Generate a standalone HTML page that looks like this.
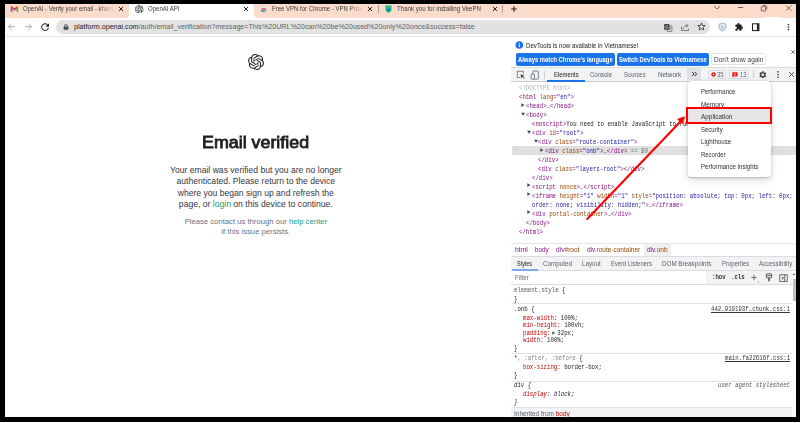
<!DOCTYPE html>
<html><head><meta charset="utf-8"><style>
html,body{margin:0;padding:0;}
body{width:800px;height:423px;background:#000;position:relative;overflow:hidden;font-family:"Liberation Sans", sans-serif;}
.t{position:absolute;white-space:nowrap;}
.r{position:absolute;}
.fade{-webkit-mask-image:linear-gradient(to right,#000 82%,transparent);}
.fade2{-webkit-mask-image:linear-gradient(to right,#000 85%,transparent);}
</style></head><body>
<div class="r" style="left:5px;top:4px;width:791px;height:413px;background:#fff;"></div>
<div class="r" style="left:0px;top:422px;width:800px;height:1px;background:#fff;"></div>
<div class="r" style="left:5px;top:4px;width:791px;height:14px;background:#fbdbc9;"></div>
<div class="r" style="left:125px;top:14px;width:4px;height:4px;background:#fff;"></div>
<div class="r" style="left:121px;top:10px;width:8px;height:8px;border-radius:4px;background:#fbdbc9"></div>
<div class="r" style="left:254px;top:14px;width:4px;height:4px;background:#fff;"></div>
<div class="r" style="left:254px;top:10px;width:8px;height:8px;border-radius:4px;background:#fbdbc9"></div>
<div class="r" style="left:129px;top:4px;width:125px;height:14px;background:#fff;border-radius:1.5px 1.5px 0 0"></div>
<div class="r" style="left:765px;top:17px;width:15px;height:1px;background:#fff;"></div>
<svg class="r" style="left:10px;top:5px;" width="9" height="7" viewBox="0 0 9 7"><path d="M1.6 6.3V1.8L4.5 4.6L7.4 1.8" fill="none" stroke="#ea4335" stroke-width="1.6" stroke-linejoin="round" stroke-linecap="round"/><path d="M1.6 3.2V6.3" stroke="#4285f4" stroke-width="1.6" stroke-linecap="round"/><path d="M7.4 3V6.3" stroke="#34a853" stroke-width="1.6" stroke-linecap="round"/><circle cx="7.4" cy="1.8" r="0.8" fill="#fbbc04"/></svg>
<div class="r fade" style="left:22.7px;top:4px;width:91px;height:10px;overflow:hidden"><div class="t" style="left:0;top:1.07px;font-size:7px;line-height:7px;color:#3c4043;transform:scaleX(0.86);transform-origin:0 0">OpenAI - Verify your email - khanh</div></div>
<svg class="r" style="left:117px;top:5px;" width="8" height="8" viewBox="0 0 8 8"><path d="M1.9 1.9L6.1 6.1M6.1 1.9L1.9 6.1" stroke="#202124" stroke-width="0.95"/></svg>
<svg class="r" style="left:135px;top:4.5px;" width="8.5" height="8.5" viewBox="0 0 24 24"><path d="M22.2819 9.8211a5.9847 5.9847 0 0 0-.5157-4.9108 6.0462 6.0462 0 0 0-6.5098-2.9A6.0651 6.0651 0 0 0 4.9807 4.1818a5.9847 5.9847 0 0 0-3.9977 2.9 6.0462 6.0462 0 0 0 .7427 7.0966 5.98 5.98 0 0 0 .511 4.9107 6.051 6.051 0 0 0 6.5146 2.9001A5.9847 5.9847 0 0 0 13.2599 24a6.0557 6.0557 0 0 0 5.7718-4.2058 5.9894 5.9894 0 0 0 3.9977-2.9001 6.0557 6.0557 0 0 0-.7475-7.0729zm-9.022 12.6081a4.4755 4.4755 0 0 1-2.8764-1.0408l.1419-.0804 4.7783-2.7582a.7948.7948 0 0 0 .3927-.6813v-6.7369l2.02 1.1686a.071.071 0 0 1 .038.052v5.5826a4.504 4.504 0 0 1-4.4945 4.4944zm-9.6607-4.1254a4.4708 4.4708 0 0 1-.5346-3.0137l.142.0852 4.783 2.7582a.7712.7712 0 0 0 .7806 0l5.8428-3.3685v2.3324a.0804.0804 0 0 1-.0332.0615L9.74 19.9502a4.4992 4.4992 0 0 1-6.1408-1.6464zM2.3408 7.8956a4.485 4.485 0 0 1 2.3655-1.9728V11.6a.7664.7664 0 0 0 .3879.6765l5.8144 3.3543-2.0201 1.1685a.0757.0757 0 0 1-.071 0l-4.8303-2.7865A4.504 4.504 0 0 1 2.3408 7.872zm16.5963 3.8558L13.1038 8.364 15.1192 7.2a.0757.0757 0 0 1 .071 0l4.8303 2.7913a4.4944 4.4944 0 0 1-.6765 8.1042v-5.6772a.79.79 0 0 0-.407-.667zm2.0107-3.0231l-.142-.0852-4.7735-2.7818a.7759.7759 0 0 0-.7854 0L9.409 9.2297V6.8974a.0662.0662 0 0 1 .0284-.0615l4.8303-2.7866a4.4992 4.4992 0 0 1 6.6802 4.66zM8.3065 12.863l-2.02-1.1638a.0804.0804 0 0 1-.038-.0567V6.0742a4.4992 4.4992 0 0 1 7.3757-3.4537l-.142.0805L8.704 5.459a.7948.7948 0 0 0-.3927.6813zm1.0976-2.3654l2.602-1.4998 2.6069 1.4998v2.9994l-2.5974 1.4997-2.6067-1.4997Z" fill="#202124"/></svg>
<div class="t" style="left:147.70px;top:5.07px;font-size:7px;line-height:7px;color:#3c4043;transform:scaleX(0.8611);transform-origin:0 0;">OpenAI API</div>
<svg class="r" style="left:241.5px;top:5px;" width="8" height="8" viewBox="0 0 8 8"><path d="M1.9 1.9L6.1 6.1M6.1 1.9L1.9 6.1" stroke="#202124" stroke-width="0.95"/></svg>
<svg class="r" style="left:260px;top:5px;" width="7.5" height="7.5" viewBox="0 0 7.5 7.5"><path d="M2.2 2.3A1.5 1.4 0 0 1 5.2 2.3" fill="none" stroke="#b8c4c8" stroke-width="0.6"/><rect x="0.2" y="1.9" width="7" height="5.3" rx="0.8" fill="#e6f2f6"/><path d="M0.9 5.6A2.8 2.7 0 0 1 6.5 5.6H5.1A1.4 1.3 0 0 0 2.3 5.6Z" fill="#ea4335"/><path d="M0.9 5.4H2.4L2.9 7H1.1Z" fill="#34a853"/><path d="M5 5.4H6.5L6.4 7H4.6Z" fill="#fbbc04"/><circle cx="3.7" cy="6" r="1.15" fill="#4285f4"/></svg>
<div class="r fade2" style="left:271.8px;top:4px;width:91px;height:10px;overflow:hidden"><div class="t" style="left:0;top:1.07px;font-size:7px;line-height:7px;color:#3c4043;transform:scaleX(0.86);transform-origin:0 0">Free VPN for Chrome - VPN Proxy</div></div>
<svg class="r" style="left:366px;top:5px;" width="8" height="8" viewBox="0 0 8 8"><path d="M1.9 1.9L6.1 6.1M6.1 1.9L1.9 6.1" stroke="#202124" stroke-width="0.95"/></svg>
<div class="r" style="left:378px;top:5px;width:1px;height:8px;background:#a8a29e;"></div>
<svg class="r" style="left:385px;top:4.8px;" width="7" height="8" viewBox="0 0 7 8"><defs><linearGradient id="vg" x1="0" y1="0" x2="0.6" y2="1"><stop offset="0" stop-color="#2fe0e0"/><stop offset="1" stop-color="#1c4fc8"/></linearGradient></defs><path d="M0.4 0.6H6.6V4.2C6.6 6 5 7.3 3.5 7.9C2 7.3 0.4 6 0.4 4.2Z" fill="#18c47c"/><circle cx="3.3" cy="3.9" r="2" fill="url(#vg)"/><rect x="4.6" y="2.1" width="1.6" height="1.1" fill="#f08080"/></svg>
<div class="t" style="left:397.00px;top:5.07px;font-size:7px;line-height:7px;color:#3c4043;transform:scaleX(0.8776);transform-origin:0 0;">Thank you for installing VeePN</div>
<svg class="r" style="left:490.5px;top:5px;" width="8" height="8" viewBox="0 0 8 8"><path d="M1.9 1.9L6.1 6.1M6.1 1.9L1.9 6.1" stroke="#202124" stroke-width="0.95"/></svg>
<div class="r" style="left:502px;top:5px;width:1px;height:8px;background:#a8a29e;"></div>
<svg class="r" style="left:510px;top:5px;" width="8" height="8" viewBox="0 0 8 8"><path d="M4 1.2V6.8M1.2 4H6.8" stroke="#202124" stroke-width="1.1"/></svg>
<svg class="r" style="left:713px;top:5px;" width="8" height="5" viewBox="0 0 8 5"><path d="M1 1.2 L4 4 L7 1.2" fill="none" stroke="#333" stroke-width="0.7"/></svg>
<svg class="r" style="left:736px;top:5px;" width="8" height="4" viewBox="0 0 8 4"><path d="M2 2.5H7.2" stroke="#333" stroke-width="0.7"/></svg>
<svg class="r" style="left:760px;top:4px;" width="8" height="8" viewBox="0 0 8 8"><rect x="1.3" y="2.7" width="4.2" height="4.2" rx="0.6" fill="none" stroke="#333" stroke-width="0.65"/><path d="M2.6 1.5H5.6A1.1 1.1 0 0 1 6.7 2.6V5.6" fill="none" stroke="#333" stroke-width="0.65"/></svg>
<svg class="r" style="left:785px;top:4px;" width="8" height="8" viewBox="0 0 8 8"><path d="M1 1.5L6.2 6.7M6.2 1.5L1 6.7" stroke="#333" stroke-width="0.7"/></svg>
<div class="r" style="left:5px;top:36px;width:791px;height:1px;background:#e3e3e3;"></div>
<svg class="r" style="left:7px;top:22px;" width="9" height="9" viewBox="0 0 9 9"><path d="M8 4.7H1.6M4.4 1.7L1.4 4.7L4.4 7.7" fill="none" stroke="#9aa0a6" stroke-width="0.85"/></svg>
<svg class="r" style="left:23.5px;top:22px;" width="9" height="9" viewBox="0 0 9 9"><path d="M1 4.7H7.4M4.6 1.7L7.6 4.7L4.6 7.7" fill="none" stroke="#9aa0a6" stroke-width="0.85"/></svg>
<svg class="r" style="left:40.5px;top:23.2px;" width="8.5" height="8" viewBox="4 3.5 16.5 16.5"><path d="M17.65 6.35A7.958 7.958 0 0 0 12 4c-4.42 0-7.99 3.58-7.99 8s3.57 8 7.99 8c3.73 0 6.84-2.55 7.73-6h-2.08A5.99 5.99 0 0 1 12 18c-3.31 0-6-2.69-6-6s2.69-6 6-6c1.66 0 3.14.69 4.22 1.78L13 11h7V4l-2.35 2.35z" fill="#202124"/></svg>
<div class="r" style="left:56px;top:20px;width:654px;height:14px;background:#e2e2e2;border-radius:7px"></div>
<svg class="r" style="left:62.7px;top:24.2px;" width="6" height="6" viewBox="0 0 6 6"><rect x="0.6" y="2.4" width="4.8" height="3.4" rx="0.5" fill="#474a4f"/><path d="M1.6 2.6V1.9a1.4 1.4 0 0 1 2.8 0V2.6" fill="none" stroke="#474a4f" stroke-width="0.8"/></svg>
<div class="t" style="left:74.00px;top:24.06px;font-size:7.13px;line-height:7.13px;color:#5f6368;"><span style="color:#202124">platform.openai.com</span>/auth/email_verification?message=This%20URL%20can%20be%20used%20only%20once&amp;success=false</div>
<svg class="r" style="left:663px;top:22.5px;" width="10" height="10" viewBox="0 0 10 10"><rect x="4.3" y="2.8" width="4.6" height="5.8" rx="0.6" fill="#e2e2e2" stroke="#5f6368" stroke-width="0.75"/><path d="M5.6 4.6H7.8M6.7 4.2V4.6M7.4 4.6C7.1 6 6.3 6.8 5.6 7.2M6 5.6C6.5 6.5 7.2 7 7.9 7.2" fill="none" stroke="#5f6368" stroke-width="0.5"/><rect x="1.1" y="1.1" width="5.3" height="5.7" rx="0.7" fill="#3c4043"/><path d="M4.9 3.1A1.45 1.45 0 1 0 5.1 4.2H3.8" fill="none" stroke="#e2e2e2" stroke-width="0.6"/></svg>
<svg class="r" style="left:680px;top:22px;" width="10" height="10" viewBox="0 0 10 10"><path d="M1.5 4.5V8.5H8.5V6.5" fill="none" stroke="#5f6368" stroke-width="0.8"/><path d="M3 7C3.5 4.5 5 3.6 7.5 3.6M6 1.8L8.2 3.6L6 5.4" fill="none" stroke="#5f6368" stroke-width="0.8"/></svg>
<svg class="r" style="left:697px;top:22px;" width="9" height="9" viewBox="0 0 9 9"><path d="M4.5 1L5.5 3.5L8.2 3.6L6.1 5.3L6.8 8L4.5 6.5L2.2 8L2.9 5.3L0.8 3.6L3.5 3.5Z" fill="none" stroke="#202124" stroke-width="0.75" stroke-linejoin="round"/></svg>
<svg class="r" style="left:718px;top:22px;" width="9" height="10" viewBox="0 0 9 10"><path d="M4.5 1 L8 2.2 V5 C8 7.2 6 8.5 4.5 9 C3 8.5 1 7.2 1 5 V2.2Z" fill="#dfe5f0" stroke="#8f9fbf" stroke-width="0.8"/><text x="3.1" y="6.8" font-size="4" fill="#8f9fbf" font-family="Liberation Sans">$</text></svg>
<svg class="r" style="left:734.8px;top:23.2px;" width="8.5" height="8" viewBox="1.5 1 22 21.5"><path d="M20.5 11H19V7c0-1.1-.9-2-2-2h-4V3.5C13 2.12 11.88 1 10.5 1S8 2.12 8 3.5V5H4c-1.1 0-1.99.9-1.99 2v3.8H3.5c1.49 0 2.7 1.21 2.7 2.7s-1.21 2.7-2.7 2.7H2V20c0 1.1.9 2 2 2h3.8v-1.5c0-1.490 1.21-2.7 2.7-2.7 1.49 0 2.7 1.21 2.7 2.7V22H17c1.1 0 2-.9 2-2v-4h1.5c1.38 0 2.5-1.12 2.5-2.5S21.88 11 20.5 11z" fill="#202124"/></svg>
<svg class="r" style="left:751px;top:22px;" width="10" height="10" viewBox="0 0 10 10"><rect x="1.5" y="1.8" width="6.4" height="6.8" fill="none" stroke="#202124" stroke-width="1.05"/><rect x="5.9" y="1.8" width="2" height="6.8" fill="#202124"/></svg>
<svg class="r" style="left:786px;top:22px;" width="4" height="10" viewBox="0 0 4 10"><circle cx="2.5" cy="2.5" r="0.85" fill="#202124"/><circle cx="2.5" cy="5" r="0.85" fill="#202124"/><circle cx="2.5" cy="7.5" r="0.85" fill="#202124"/></svg>
<svg class="r" style="left:248px;top:54px;" width="16" height="16" viewBox="0 0 24 24"><path d="M22.2819 9.8211a5.9847 5.9847 0 0 0-.5157-4.9108 6.0462 6.0462 0 0 0-6.5098-2.9A6.0651 6.0651 0 0 0 4.9807 4.1818a5.9847 5.9847 0 0 0-3.9977 2.9 6.0462 6.0462 0 0 0 .7427 7.0966 5.98 5.98 0 0 0 .511 4.9107 6.051 6.051 0 0 0 6.5146 2.9001A5.9847 5.9847 0 0 0 13.2599 24a6.0557 6.0557 0 0 0 5.7718-4.2058 5.9894 5.9894 0 0 0 3.9977-2.9001 6.0557 6.0557 0 0 0-.7475-7.0729zm-9.022 12.6081a4.4755 4.4755 0 0 1-2.8764-1.0408l.1419-.0804 4.7783-2.7582a.7948.7948 0 0 0 .3927-.6813v-6.7369l2.02 1.1686a.071.071 0 0 1 .038.052v5.5826a4.504 4.504 0 0 1-4.4945 4.4944zm-9.6607-4.1254a4.4708 4.4708 0 0 1-.5346-3.0137l.142.0852 4.783 2.7582a.7712.7712 0 0 0 .7806 0l5.8428-3.3685v2.3324a.0804.0804 0 0 1-.0332.0615L9.74 19.9502a4.4992 4.4992 0 0 1-6.1408-1.6464zM2.3408 7.8956a4.485 4.485 0 0 1 2.3655-1.9728V11.6a.7664.7664 0 0 0 .3879.6765l5.8144 3.3543-2.0201 1.1685a.0757.0757 0 0 1-.071 0l-4.8303-2.7865A4.504 4.504 0 0 1 2.3408 7.872zm16.5963 3.8558L13.1038 8.364 15.1192 7.2a.0757.0757 0 0 1 .071 0l4.8303 2.7913a4.4944 4.4944 0 0 1-.6765 8.1042v-5.6772a.79.79 0 0 0-.407-.667zm2.0107-3.0231l-.142-.0852-4.7735-2.7818a.7759.7759 0 0 0-.7854 0L9.409 9.2297V6.8974a.0662.0662 0 0 1 .0284-.0615l4.8303-2.7866a4.4992 4.4992 0 0 1 6.6802 4.66zM8.3065 12.863l-2.02-1.1638a.0804.0804 0 0 1-.038-.0567V6.0742a4.4992 4.4992 0 0 1 7.3757-3.4537l-.142.0805L8.704 5.459a.7948.7948 0 0 0-.3927.6813zm1.0976-2.3654l2.602-1.4998 2.6069 1.4998v2.9994l-2.5974 1.4997-2.6067-1.4997Z" fill="#202123"/></svg>
<div class="t" style="left:202.3px;top:133.5px;font-size:16.6px;line-height:18px;color:#202123;-webkit-text-stroke:0.8px #202123;transform:scaleX(1.075);transform-origin:0 0">Email verified</div>
<div class="t" style="left:5px;width:501.6px;text-align:center;top:164.5px;font-size:8.6px;line-height:11.5px;color:#353740">Your email was verified but you are no longer<br>authenticated. Please return to the device<br>where you began sign up and refresh the<br>page, or <span style="color:#10a37f">login</span> on this device to continue.</div>
<div class="t" style="left:5px;width:501.6px;text-align:center;top:216.8px;font-size:7.7px;line-height:10.6px;color:#6e6e80">Please contact us through our <span style="color:#10a37f">help center</span><br>if this issue persists.</div>
<svg class="r" style="left:515px;top:41px;" width="9" height="9" viewBox="0 0 9 9"><circle cx="4.3" cy="4" r="3.8" fill="#1a73e8"/><rect x="3.8" y="3.3" width="1" height="2.8" fill="#fff"/><rect x="3.8" y="1.8" width="1" height="1" fill="#fff"/></svg>
<div class="t" style="left:526.00px;top:42.07px;font-size:7px;line-height:7px;color:#202124;transform:scaleX(0.8755);transform-origin:0 0;">DevTools is now available in Vietnamese!</div>
<svg class="r" style="left:789px;top:48px;" width="8" height="8" viewBox="0 0 8 8"><path d="M2.2 2.2L5.8 5.8M5.8 2.2L2.2 5.8" stroke="#5f6368" stroke-width="0.8"/></svg>
<div class="r" style="left:516px;top:53px;width:98.5px;height:12.5px;background:#1a73e8;border-radius:2px"></div>
<div class="t" style="left:517.90px;top:56.74px;font-size:6.8px;line-height:6.8px;color:#fff;font-weight:bold;transform:scaleX(0.8603);transform-origin:0 0;">Always match Chrome's language</div>
<div class="r" style="left:617px;top:53px;width:92px;height:12.5px;background:#1a73e8;border-radius:2px"></div>
<div class="t" style="left:619.00px;top:56.74px;font-size:6.8px;line-height:6.8px;color:#fff;font-weight:bold;transform:scaleX(0.8617);transform-origin:0 0;">Switch DevTools to Vietnamese</div>
<div class="r" style="left:711.3px;top:53.2px;width:54.3px;height:12.3px;background:#fff;border:0.7px solid #dfe1e5;border-radius:2.5px;box-sizing:border-box"></div>
<div class="t" style="left:713.80px;top:56.74px;font-size:6.8px;line-height:6.8px;color:#3c4043;transform:scaleX(0.9509);transform-origin:0 0;">Don't show again</div>
<div class="r" style="left:511px;top:67px;width:285px;height:15px;background:#f1f3f4;border-top:1px solid #dadce0;border-bottom:1px solid #cbcdd1;box-sizing:border-box"></div>
<svg class="r" style="left:516px;top:70px;" width="9" height="10" viewBox="0 0 9 10"><path d="M4.2 7.6H1.3V1.3H7.3V4.2" fill="none" stroke="#5f6368" stroke-width="0.75"/><path d="M4.3 4.3L8.6 5.8L6.9 6.5L8.8 8.4L8.3 8.9L6.4 7L5.7 8.7Z" fill="#474747"/></svg>
<svg class="r" style="left:529.5px;top:69.5px;" width="10" height="10" viewBox="0 0 10 10"><rect x="2.8" y="1.1" width="5.6" height="8" rx="0.6" fill="none" stroke="#5f6368" stroke-width="0.75"/><rect x="1.1" y="4" width="3.4" height="5.1" rx="0.5" fill="#f1f3f4" stroke="#5f6368" stroke-width="0.75"/></svg>
<div class="r" style="left:544px;top:70.5px;width:1px;height:8px;background:#cbcdd1;"></div>
<div class="t" style="left:553.50px;top:71.54px;font-size:6.8px;line-height:6.8px;color:#202124;transform:scaleX(0.8714);transform-origin:0 0;">Elements</div>
<div class="r" style="left:547px;top:80px;width:38px;height:2px;background:#1a73e8;"></div>
<div class="t" style="left:590.00px;top:71.54px;font-size:6.8px;line-height:6.8px;color:#5f6368;transform:scaleX(0.8818);transform-origin:0 0;">Console</div>
<div class="t" style="left:624.00px;top:71.54px;font-size:6.8px;line-height:6.8px;color:#5f6368;transform:scaleX(0.8659);transform-origin:0 0;">Sources</div>
<div class="t" style="left:657.80px;top:71.54px;font-size:6.8px;line-height:6.8px;color:#5f6368;transform:scaleX(0.9303);transform-origin:0 0;">Network</div>
<div class="r" style="left:687.2px;top:67.5px;width:14px;height:12.5px;background:#dfe1e5;"></div>
<svg class="r" style="left:690.5px;top:71px;" width="7" height="6" viewBox="0 0 7 6"><path d="M1.2 1L3 3L1.2 5M3.8 1L5.6 3L3.8 5" fill="none" stroke="#202124" stroke-width="0.9"/></svg>
<div class="r" style="left:707.6px;top:69.5px;width:18.5px;height:9.6px;background:#f5f6f7;border:0.7px solid #dadce0;border-radius:2px;box-sizing:border-box"></div>
<svg class="r" style="left:710.5px;top:72.3px;" width="5" height="5" viewBox="0 0 5 5"><circle cx="2.5" cy="2.5" r="2.3" fill="#e41e1e"/><circle cx="2.5" cy="2.5" r="0.8" fill="#fff"/></svg>
<div class="t" style="left:717.00px;top:71.54px;font-size:6.8px;line-height:6.8px;color:#5f6368;transform:scaleX(0.8594);transform-origin:0 0;">35</div>
<div class="r" style="left:728.7px;top:69.5px;width:20.6px;height:9.6px;background:#f5f6f7;border:0.7px solid #dadce0;border-radius:2px;box-sizing:border-box"></div>
<svg class="r" style="left:731.8px;top:71.8px;" width="6" height="6" viewBox="0 0 6 6"><path d="M0.3 0.3H5.6V4.4H1.6L0.3 5.6Z" fill="#e41e1e"/><path d="M2.9 1.1V3.6" stroke="#fff" stroke-width="0.7"/></svg>
<div class="t" style="left:739.70px;top:71.54px;font-size:6.8px;line-height:6.8px;color:#5f6368;transform:scaleX(0.8594);transform-origin:0 0;">13</div>
<div class="r" style="left:753px;top:70.3px;width:1px;height:8px;background:#cbcdd1;"></div>
<svg class="r" style="left:758.8px;top:70.6px;" width="7.6" height="7.6" viewBox="2.2 1.6 19.6 20.8"><path d="M19.14 12.94c.04-.3.06-.61.06-.94 0-.32-.02-.64-.07-.94l2.03-1.58a.49.49 0 0 0 .12-.61l-1.92-3.32a.488.488 0 0 0-.59-.22l-2.39.96c-.5-.38-1.030-.7-1.62-.94l-.36-2.54a.484.484 0 0 0-.48-.41h-3.84c-.24 0-.43.17-.47.41l-.36 2.54c-.59.24-1.13.57-1.62.94l-2.39-.96c-.22-.08-.47 0-.59.22L2.74 8.87c-.12.21-.08.47.12.61l2.03 1.58c-.05.3-.09.63-.09.94s.02.64.07.94l-2.03 1.58a.49.49 0 0 0-.12.61l1.92 3.32c.12.22.37.29.59.22l2.39-.96c.5.38 1.03.7 1.62.94l.36 2.54c.05.24.24.41.48.41h3.84c.24 0 .44-.17.47-.41l.36-2.54c.59-.24 1.13-.56 1.62-.94l2.39.96c.22.08.47 0 .59-.22l1.92-3.32c.12-.22.07-.47-.12-.61l-2.01-1.58zM12 15.6c-1.98 0-3.6-1.62-3.6-3.6s1.62-3.6 3.6-3.6 3.6 1.62 3.6 3.6-1.62 3.6-3.6 3.6z" fill="#474747"/></svg>
<svg class="r" style="left:775.5px;top:70px;" width="4" height="9" viewBox="0 0 4 9"><circle cx="2" cy="1.9" r="0.8" fill="#333"/><circle cx="2" cy="4.6" r="0.8" fill="#333"/><circle cx="2" cy="7.3" r="0.8" fill="#333"/></svg>
<svg class="r" style="left:788px;top:70px;" width="8" height="9" viewBox="0 0 8 9"><path d="M1.2 2.2L5.8 6.8M5.8 2.2L1.2 6.8" stroke="#474747" stroke-width="0.95"/></svg>
<div class="r" style="left:512px;top:146px;width:284px;height:8.7px;background:#e0e0e0;"></div>
<div class="t" style="left:513.00px;top:147.27px;font-size:5px;line-height:5px;color:#777;">&middot;&middot;&middot;</div>
<div class="t" style="left:519.40px;top:86.30px;font-size:6.4px;line-height:6.4px;color:#881280;font-family:'Liberation Mono', monospace;transform:scaleX(0.8943);transform-origin:0 0;white-space:pre;"><span style="color:#b0b0b0">&lt;!DOCTYPE html&gt;</span></div>
<div class="t" style="left:519.40px;top:95.25px;font-size:6.4px;line-height:6.4px;color:#881280;font-family:'Liberation Mono', monospace;transform:scaleX(0.8943);transform-origin:0 0;white-space:pre;"><span style="color:#881280">&lt;html</span> <span style="color:#994500">lang</span><span style="color:#881280">=</span><span style="color:#1a1aa6">"en"</span><span style="color:#881280">&gt;</span></div>
<div class="t" style="left:525.70px;top:104.20px;font-size:6.4px;line-height:6.4px;color:#881280;font-family:'Liberation Mono', monospace;transform:scaleX(0.8943);transform-origin:0 0;white-space:pre;"><span style="color:#881280">&lt;head&gt;</span><span style="color:#333">…</span><span style="color:#881280">&lt;/head&gt;</span></div>
<svg class="r" style="left:520.9px;top:102.9px;" width="5" height="5" viewBox="0 0 5 5"><path d="M0.3 0.2L3.5 2.1L0.3 4Z" fill="#474747"/></svg>
<div class="t" style="left:525.70px;top:113.15px;font-size:6.4px;line-height:6.4px;color:#881280;font-family:'Liberation Mono', monospace;transform:scaleX(0.8943);transform-origin:0 0;white-space:pre;"><span style="color:#881280">&lt;body&gt;</span></div>
<svg class="r" style="left:520.9px;top:112.25000000000001px;" width="5" height="5" viewBox="0 0 5 5"><path d="M0.1 0.8L4 0.8L2.05 3.8Z" fill="#474747"/></svg>
<div class="t" style="left:532.00px;top:122.10px;font-size:6.4px;line-height:6.4px;color:#881280;font-family:'Liberation Mono', monospace;transform:scaleX(0.8943);transform-origin:0 0;white-space:pre;"><span style="color:#881280">&lt;noscript&gt;</span><span style="color:#222">You need to enable JavaScript to run this app.</span></div>
<div class="t" style="left:532.00px;top:131.05px;font-size:6.4px;line-height:6.4px;color:#881280;font-family:'Liberation Mono', monospace;transform:scaleX(0.8943);transform-origin:0 0;white-space:pre;"><span style="color:#881280">&lt;div</span> <span style="color:#994500">id</span><span style="color:#881280">=</span><span style="color:#1a1aa6">"root"</span><span style="color:#881280">&gt;</span></div>
<svg class="r" style="left:527.2px;top:130.15px;" width="5" height="5" viewBox="0 0 5 5"><path d="M0.1 0.8L4 0.8L2.05 3.8Z" fill="#474747"/></svg>
<div class="t" style="left:538.30px;top:140.00px;font-size:6.4px;line-height:6.4px;color:#881280;font-family:'Liberation Mono', monospace;transform:scaleX(0.8943);transform-origin:0 0;white-space:pre;"><span style="color:#881280">&lt;div</span> <span style="color:#994500">class</span><span style="color:#881280">=</span><span style="color:#1a1aa6">"route-container"</span><span style="color:#881280">&gt;</span></div>
<svg class="r" style="left:533.5px;top:139.1px;" width="5" height="5" viewBox="0 0 5 5"><path d="M0.1 0.8L4 0.8L2.05 3.8Z" fill="#474747"/></svg>
<div class="t" style="left:544.60px;top:148.95px;font-size:6.4px;line-height:6.4px;color:#881280;font-family:'Liberation Mono', monospace;transform:scaleX(0.8943);transform-origin:0 0;white-space:pre;"><span style="color:#881280">&lt;div</span> <span style="color:#994500">class</span><span style="color:#881280">=</span><span style="color:#1a1aa6">"onb"</span><span style="color:#881280">&gt;</span><span style="color:#333">…</span><span style="color:#881280">&lt;/div&gt;</span><span style="color:#777;font-style:italic"> == $0</span></div>
<svg class="r" style="left:539.8000000000001px;top:147.65px;" width="5" height="5" viewBox="0 0 5 5"><path d="M0.3 0.2L3.5 2.1L0.3 4Z" fill="#474747"/></svg>
<div class="t" style="left:538.30px;top:157.90px;font-size:6.4px;line-height:6.4px;color:#881280;font-family:'Liberation Mono', monospace;transform:scaleX(0.8943);transform-origin:0 0;white-space:pre;"><span style="color:#881280">&lt;/div&gt;</span></div>
<div class="t" style="left:538.30px;top:166.85px;font-size:6.4px;line-height:6.4px;color:#881280;font-family:'Liberation Mono', monospace;transform:scaleX(0.8943);transform-origin:0 0;white-space:pre;"><span style="color:#881280">&lt;div</span> <span style="color:#994500">class</span><span style="color:#881280">=</span><span style="color:#1a1aa6">"layers-root"</span><span style="color:#881280">&gt;&lt;/div&gt;</span></div>
<div class="t" style="left:532.00px;top:175.80px;font-size:6.4px;line-height:6.4px;color:#881280;font-family:'Liberation Mono', monospace;transform:scaleX(0.8943);transform-origin:0 0;white-space:pre;"><span style="color:#881280">&lt;/div&gt;</span></div>
<div class="t" style="left:532.00px;top:184.75px;font-size:6.4px;line-height:6.4px;color:#881280;font-family:'Liberation Mono', monospace;transform:scaleX(0.8943);transform-origin:0 0;white-space:pre;"><span style="color:#881280">&lt;script</span> <span style="color:#994500">nonce</span><span style="color:#881280">&gt;</span><span style="color:#333">…</span><span style="color:#881280">&lt;/script&gt;</span></div>
<svg class="r" style="left:527.2px;top:183.45000000000002px;" width="5" height="5" viewBox="0 0 5 5"><path d="M0.3 0.2L3.5 2.1L0.3 4Z" fill="#474747"/></svg>
<div class="t" style="left:532.00px;top:193.70px;font-size:6.4px;line-height:6.4px;color:#881280;font-family:'Liberation Mono', monospace;transform:scaleX(0.8943);transform-origin:0 0;white-space:pre;"><span style="color:#881280">&lt;iframe</span> <span style="color:#994500">height</span><span style="color:#881280">=</span><span style="color:#1a1aa6">"1"</span> <span style="color:#994500">width</span><span style="color:#881280">=</span><span style="color:#1a1aa6">"1"</span> <span style="color:#994500">style</span><span style="color:#881280">=</span><span style="color:#1a1aa6">"position: absolute; top: 0px; left: 0px;</span></div>
<svg class="r" style="left:527.2px;top:192.4px;" width="5" height="5" viewBox="0 0 5 5"><path d="M0.3 0.2L3.5 2.1L0.3 4Z" fill="#474747"/></svg>
<div class="t" style="left:532.00px;top:202.65px;font-size:6.4px;line-height:6.4px;color:#881280;font-family:'Liberation Mono', monospace;transform:scaleX(0.8943);transform-origin:0 0;white-space:pre;"><span style="color:#1a1aa6">order: none; visibility: hidden;"</span><span style="color:#881280">&gt;</span><span style="color:#333">…</span><span style="color:#881280">&lt;/iframe&gt;</span></div>
<div class="t" style="left:532.00px;top:211.60px;font-size:6.4px;line-height:6.4px;color:#881280;font-family:'Liberation Mono', monospace;transform:scaleX(0.8943);transform-origin:0 0;white-space:pre;"><span style="color:#881280">&lt;div</span> <span style="color:#994500">portal-container</span><span style="color:#881280">&gt;</span><span style="color:#333">…</span><span style="color:#881280">&lt;/div&gt;</span></div>
<svg class="r" style="left:527.2px;top:210.3px;" width="5" height="5" viewBox="0 0 5 5"><path d="M0.3 0.2L3.5 2.1L0.3 4Z" fill="#474747"/></svg>
<div class="t" style="left:525.70px;top:220.55px;font-size:6.4px;line-height:6.4px;color:#881280;font-family:'Liberation Mono', monospace;transform:scaleX(0.8943);transform-origin:0 0;white-space:pre;"><span style="color:#881280">&lt;/body&gt;</span></div>
<div class="t" style="left:519.40px;top:229.50px;font-size:6.4px;line-height:6.4px;color:#881280;font-family:'Liberation Mono', monospace;transform:scaleX(0.8943);transform-origin:0 0;white-space:pre;"><span style="color:#881280">&lt;/html&gt;</span></div>
<div class="r" style="left:511px;top:243px;width:285px;height:1px;background:#e6e6e6;"></div>
<div class="r" style="left:644px;top:244px;width:27px;height:11.5px;background:#eef0f2;"></div>
<div class="t" style="left:515.00px;top:246.74px;font-size:6.8px;line-height:6.8px;color:#202124;transform:scaleX(0.9925);transform-origin:0 0;"><span style="color:#881280">html</span><span style="color:#994500"></span></div>
<div class="t" style="left:535.00px;top:246.74px;font-size:6.8px;line-height:6.8px;color:#202124;transform:scaleX(0.9325);transform-origin:0 0;"><span style="color:#881280">body</span><span style="color:#994500"></span></div>
<div class="t" style="left:556.20px;top:246.74px;font-size:6.8px;line-height:6.8px;color:#202124;transform:scaleX(0.9714);transform-origin:0 0;"><span style="color:#881280">div</span><span style="color:#994500">#root</span></div>
<div class="t" style="left:586.80px;top:246.74px;font-size:6.8px;line-height:6.8px;color:#202124;transform:scaleX(0.9532);transform-origin:0 0;"><span style="color:#881280">div</span><span style="color:#994500">.route-container</span></div>
<div class="t" style="left:647.20px;top:246.74px;font-size:6.8px;line-height:6.8px;color:#202124;transform:scaleX(0.9569);transform-origin:0 0;"><span style="color:#881280">div</span><span style="color:#994500">.onb</span></div>
<div class="r" style="left:511px;top:255.5px;width:285px;height:15px;background:#f1f3f4;border-top:1px solid #dadce0;border-bottom:1px solid #dadce0;box-sizing:border-box"></div>
<div class="t" style="left:516.90px;top:260.64px;font-size:6.8px;line-height:6.8px;color:#202124;transform:scaleX(0.8100);transform-origin:0 0;">Styles</div>
<div class="r" style="left:511.5px;top:268.8px;width:26px;height:1.8px;background:#7aa7f0;"></div>
<div class="t" style="left:542.50px;top:260.64px;font-size:6.8px;line-height:6.8px;color:#5f6368;transform:scaleX(0.9243);transform-origin:0 0;">Computed</div>
<div class="t" style="left:581.90px;top:260.64px;font-size:6.8px;line-height:6.8px;color:#5f6368;transform:scaleX(0.9159);transform-origin:0 0;">Layout</div>
<div class="t" style="left:610.70px;top:260.64px;font-size:6.8px;line-height:6.8px;color:#5f6368;transform:scaleX(0.8748);transform-origin:0 0;">Event Listeners</div>
<div class="t" style="left:661.60px;top:260.64px;font-size:6.8px;line-height:6.8px;color:#5f6368;transform:scaleX(0.9206);transform-origin:0 0;">DOM Breakpoints</div>
<div class="t" style="left:721.70px;top:260.64px;font-size:6.8px;line-height:6.8px;color:#5f6368;transform:scaleX(0.8809);transform-origin:0 0;">Properties</div>
<div class="t" style="left:759.40px;top:260.64px;font-size:6.8px;line-height:6.8px;color:#5f6368;transform:scaleX(0.8965);transform-origin:0 0;">Accessibility</div>
<div class="r" style="left:511px;top:270.5px;width:285px;height:14px;background:#fff;border-bottom:1px solid #dadce0;box-sizing:border-box"></div>
<div class="r" style="left:706px;top:271px;width:86px;height:13px;background:#f1f3f4;"></div>
<div class="t" style="left:515.30px;top:275.24px;font-size:6.8px;line-height:6.8px;color:#6b6b6b;transform:scaleX(0.9066);transform-origin:0 0;">Filter</div>
<div class="t" style="left:712.00px;top:274.90px;font-size:6.4px;line-height:6.4px;color:#333;font-family:'Liberation Mono', monospace;transform:scaleX(0.8943);transform-origin:0 0;"><b>:hov</b></div>
<div class="t" style="left:731.00px;top:274.90px;font-size:6.4px;line-height:6.4px;color:#333;font-family:'Liberation Mono', monospace;transform:scaleX(0.8943);transform-origin:0 0;"><b>.cls</b></div>
<svg class="r" style="left:750px;top:273px;" width="10" height="10" viewBox="0 0 10 10"><path d="M4 1.8V7.2M1.3 4.5H6.7" stroke="#5f6368" stroke-width="0.9"/><path d="M9 8L9 9.3L7.7 9.3Z" fill="#5f6368"/></svg>
<svg class="r" style="left:764.5px;top:273px;" width="8" height="9" viewBox="0 0 8 9"><rect x="1.3" y="0.8" width="5.4" height="4" rx="0.8" fill="none" stroke="#474747" stroke-width="0.9"/><path d="M1.3 2.6H6.7" stroke="#474747" stroke-width="0.8"/><path d="M4 5V8.3" stroke="#474747" stroke-width="1.5"/></svg>
<svg class="r" style="left:778.5px;top:273.5px;" width="9" height="8" viewBox="0 0 9 8"><rect x="0.8" y="0.8" width="7.4" height="6.6" fill="none" stroke="#474747" stroke-width="0.8"/><path d="M5.7 0.8V7.4" stroke="#474747" stroke-width="0.8"/><path d="M4.3 2.5L2.5 4.1L4.3 5.7Z" fill="#474747"/></svg>
<div class="r" style="left:792.5px;top:279px;width:3px;height:22px;background:#c1c1c1;"></div>
<svg class="r" style="left:792px;top:272px;" width="4" height="4" viewBox="0 0 4 4"><path d="M0.5 3L2 1L3.5 3Z" fill="#777"/></svg>
<div class="t" style="left:514.00px;top:288.00px;font-size:6.4px;line-height:6.4px;color:#222;font-family:'Liberation Mono', monospace;transform:scaleX(0.8943);transform-origin:0 0;"><span style="color:#555">element.style</span> {</div>
<div class="t" style="left:514.00px;top:296.70px;font-size:6.4px;line-height:6.4px;color:#222;font-family:'Liberation Mono', monospace;transform:scaleX(0.8943);transform-origin:0 0;">}</div>
<div class="r" style="left:511px;top:303px;width:281px;height:1px;background:#e2e2e2;"></div>
<div class="t" style="left:514.00px;top:307.20px;font-size:6.4px;line-height:6.4px;color:#222;font-family:'Liberation Mono', monospace;transform:scaleX(0.8943);transform-origin:0 0;">.onb {</div>
<div class="t" style="left:711.32px;top:307.20px;font-size:6.4px;line-height:6.4px;color:#333;font-family:'Liberation Mono', monospace;transform:scaleX(0.8941);transform-origin:0 0;"><u>442.919193f…chunk.css:1</u></div>
<div class="t" style="left:523.00px;top:315.60px;font-size:6.4px;line-height:6.4px;color:#222;font-family:'Liberation Mono', monospace;transform:scaleX(0.8943);transform-origin:0 0;"><span style="color:#c80000">max-width</span>: 100%;</div>
<div class="t" style="left:523.00px;top:323.20px;font-size:6.4px;line-height:6.4px;color:#222;font-family:'Liberation Mono', monospace;transform:scaleX(0.8943);transform-origin:0 0;"><span style="color:#c80000">min-height</span>: 100vh;</div>
<div class="t" style="left:523.00px;top:330.60px;font-size:6.4px;line-height:6.4px;color:#222;font-family:'Liberation Mono', monospace;transform:scaleX(0.8943);transform-origin:0 0;white-space:pre;"><span style="color:#c80000">padding</span>:  32px;</div>
<div class="t" style="left:523.00px;top:338.00px;font-size:6.4px;line-height:6.4px;color:#222;font-family:'Liberation Mono', monospace;transform:scaleX(0.8943);transform-origin:0 0;"><span style="color:#c80000">width</span>: 100%;</div>
<div class="t" style="left:514.00px;top:345.50px;font-size:6.4px;line-height:6.4px;color:#222;font-family:'Liberation Mono', monospace;transform:scaleX(0.8943);transform-origin:0 0;">}</div>
<div class="r" style="left:511px;top:353px;width:281px;height:1px;background:#e2e2e2;"></div>
<div class="t" style="left:514.00px;top:356.40px;font-size:6.4px;line-height:6.4px;color:#222;font-family:'Liberation Mono', monospace;transform:scaleX(0.8943);transform-origin:0 0;">*<span style="color:#888">, :after, :before</span> {</div>
<div class="t" style="left:725.05px;top:356.40px;font-size:6.4px;line-height:6.4px;color:#333;font-family:'Liberation Mono', monospace;transform:scaleX(0.8941);transform-origin:0 0;"><u>main.fa22616f.css:1</u></div>
<div class="t" style="left:523.00px;top:365.00px;font-size:6.4px;line-height:6.4px;color:#222;font-family:'Liberation Mono', monospace;transform:scaleX(0.8943);transform-origin:0 0;"><span style="color:#c80000">box-sizing</span>: border-box;</div>
<div class="t" style="left:514.00px;top:372.70px;font-size:6.4px;line-height:6.4px;color:#222;font-family:'Liberation Mono', monospace;transform:scaleX(0.8943);transform-origin:0 0;">}</div>
<div class="r" style="left:511px;top:380.5px;width:281px;height:1px;background:#e2e2e2;"></div>
<div class="t" style="left:514.00px;top:383.30px;font-size:6.4px;line-height:6.4px;color:#222;font-family:'Liberation Mono', monospace;transform:scaleX(0.8943);transform-origin:0 0;"><i>div {</i></div>
<div class="t" style="left:718.19px;top:383.30px;font-size:6.4px;line-height:6.4px;color:#555;font-family:'Liberation Mono', monospace;transform:scaleX(0.8941);transform-origin:0 0;"><i>user agent stylesheet</i></div>
<div class="t" style="left:523.00px;top:392.00px;font-size:6.4px;line-height:6.4px;color:#222;font-family:'Liberation Mono', monospace;transform:scaleX(0.8943);transform-origin:0 0;"><i><span style="color:#c80000">display</span>: block;</i></div>
<div class="t" style="left:514.00px;top:399.70px;font-size:6.4px;line-height:6.4px;color:#222;font-family:'Liberation Mono', monospace;transform:scaleX(0.8943);transform-origin:0 0;"><i>}</i></div>
<svg class="r" style="left:552.2px;top:331.2px;" width="4" height="4" viewBox="0 0 4 4"><path d="M0.4 0.3L3.2 2L0.4 3.7Z" fill="#474747"/></svg>
<div class="r" style="left:511px;top:407px;width:281px;height:10px;background:#f1f3f4;border-top:1px solid #e2e2e2;box-sizing:border-box"></div>
<div class="t" style="left:514.00px;top:410.84px;font-size:6.8px;line-height:6.8px;color:#5f6368;transform:scaleX(0.9507);transform-origin:0 0;">Inherited from <span style="color:#c80000">body</span></div>
<div class="r" style="left:688px;top:81px;width:83px;height:95.5px;background:#fff;border-radius:3.5px;box-shadow:0 0.5px 2px rgba(0,0,0,0.22),0 3px 9px rgba(0,0,0,0.14)"></div>
<div class="r" style="left:688px;top:108.5px;width:83px;height:14px;background:#e6e6e6;"></div>
<div class="t" style="left:700.60px;top:89.44px;font-size:6.8px;line-height:6.8px;color:#303134;transform:scaleX(0.8837);transform-origin:0 0;">Performance</div>
<div class="t" style="left:700.60px;top:101.89px;font-size:6.8px;line-height:6.8px;color:#303134;transform:scaleX(0.9447);transform-origin:0 0;">Memory</div>
<div class="t" style="left:700.60px;top:114.34px;font-size:6.8px;line-height:6.8px;color:#303134;transform:scaleX(0.9409);transform-origin:0 0;">Application</div>
<div class="t" style="left:700.60px;top:126.79px;font-size:6.8px;line-height:6.8px;color:#303134;transform:scaleX(0.8834);transform-origin:0 0;">Security</div>
<div class="t" style="left:700.60px;top:139.24px;font-size:6.8px;line-height:6.8px;color:#303134;transform:scaleX(0.9076);transform-origin:0 0;">Lighthouse</div>
<div class="t" style="left:700.60px;top:151.69px;font-size:6.8px;line-height:6.8px;color:#303134;transform:scaleX(0.8760);transform-origin:0 0;">Recorder</div>
<div class="t" style="left:700.60px;top:164.14px;font-size:6.8px;line-height:6.8px;color:#303134;transform:scaleX(0.8987);transform-origin:0 0;">Performance insights</div>
<div class="r" style="left:685.6px;top:107px;width:86.6px;height:17px;background:transparent;border:2px solid #ff0000;box-sizing:border-box"></div>
<svg class="r" style="left:580px;top:105px;" width="110" height="120" viewBox="0 0 110 120"><path d="M7.2 114 L101 16" stroke="#ff0000" stroke-width="2.1" stroke-linecap="round"/><path d="M104.5 11.8 L102.4 18.8 L97.6 14.2 Z" fill="#ff0000" stroke="#ff0000" stroke-width="0.8" stroke-linejoin="round"/></svg>
</body></html>
